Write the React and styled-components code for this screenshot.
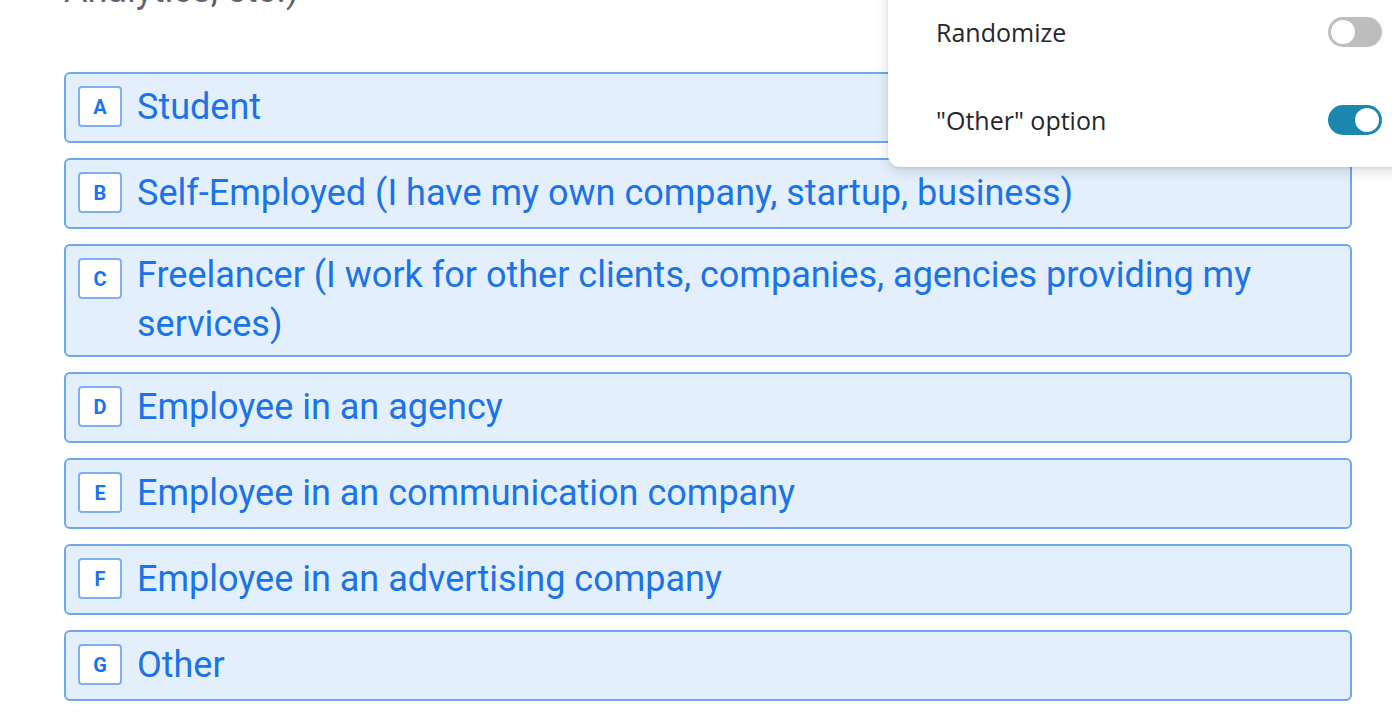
import React from "react";
import styled, { createGlobalStyle } from "styled-components";

const Global = createGlobalStyle`
  html, body {
    margin: 0;
    padding: 0;
    background: #ffffff;
    overflow: hidden;
  }
  body {
    font-family: Roboto, "Liberation Sans", sans-serif;
  }
`;

const Page = styled.div`
  position: relative;
  width: 1392px;
  height: 728px;
  overflow: hidden;
`;

const Content = styled.div`
  padding: 0 40px 0 64px;
`;

const Question = styled.h2`
  margin: -34px 0 0 0;
  font-size: 36px;
  line-height: 48px;
  font-weight: 400;
  color: #5f6368;
`;

const Options = styled.div`
  display: flex;
  flex-direction: column;
  gap: 15px;
  margin-top: 58px;
  width: 1288px;
`;

const Option = styled.div`
  display: flex;
  align-items: center;
  gap: 15px;
  box-sizing: border-box;
  padding: 5px 12px 6px;
  border: 2px solid #6ea6ef;
  border-radius: 6px;
  background: #e3effc;
  color: #1a73e8;
`;

const Letter = styled.span`
  flex: none;
  align-self: flex-start;
  display: flex;
  align-items: center;
  justify-content: center;
  box-sizing: border-box;
  width: 44px;
  height: 41px;
  margin: 7px 0 8px;
  border: 2px solid #7cb0f2;
  border-radius: 4px;
  background: #ffffff;
  font-size: 20px;
  font-weight: 700;
  color: #1a73e8;
`;

const Label = styled.span`
  font-size: 36px;
  line-height: 49px;
`;

const Panel = styled.div`
  position: absolute;
  top: -20px;
  left: 888px;
  width: 540px;
  box-sizing: border-box;
  padding: 8px 0 3px 48px;
  background: #ffffff;
  border-radius: 0 0 0 12px;
  box-shadow: 0 4px 14px rgba(0, 0, 0, 0.14), 0 1px 3px rgba(0, 0, 0, 0.08);
`;

const SettingRow = styled.div`
  display: flex;
  align-items: center;
  justify-content: space-between;
  height: 88px;
  padding-right: 46px;
  font-family: "Open Sans", "Noto Sans", sans-serif;
  font-size: 25px;
  color: #262627;
`;

const Toggle = styled.span`
  position: relative;
  width: 54px;
  height: 30px;
  border-radius: 15px;
  background: ${(p) => (p.$on ? "#1b87ae" : "#bdbdbd")};

  &::after {
    content: "";
    position: absolute;
    top: 3px;
    left: ${(p) => (p.$on ? "27px" : "3px")};
    width: 24px;
    height: 24px;
    border-radius: 50%;
    background: #ffffff;
  }
`;

const options = [
  ["A", "Student"],
  ["B", "Self-Employed (I have my own company, startup, business)"],
  ["C", "Freelancer (I work for other clients, companies, agencies providing my services)"],
  ["D", "Employee in an agency"],
  ["E", "Employee in an communication company"],
  ["F", "Employee in an advertising company"],
  ["G", "Other"],
];

export default function App() {
  return (
    <Page>
      <Global />
      <Content>
        <Question>Analytics, etc.)</Question>
        <Options>
          {options.map(([k, text]) => (
            <Option key={k}>
              <Letter>{k}</Letter>
              <Label>{text}</Label>
            </Option>
          ))}
        </Options>
      </Content>
      <Panel>
        <SettingRow>
          Randomize
          <Toggle />
        </SettingRow>
        <SettingRow>
          "Other" option
          <Toggle $on />
        </SettingRow>
      </Panel>
    </Page>
  );
}
